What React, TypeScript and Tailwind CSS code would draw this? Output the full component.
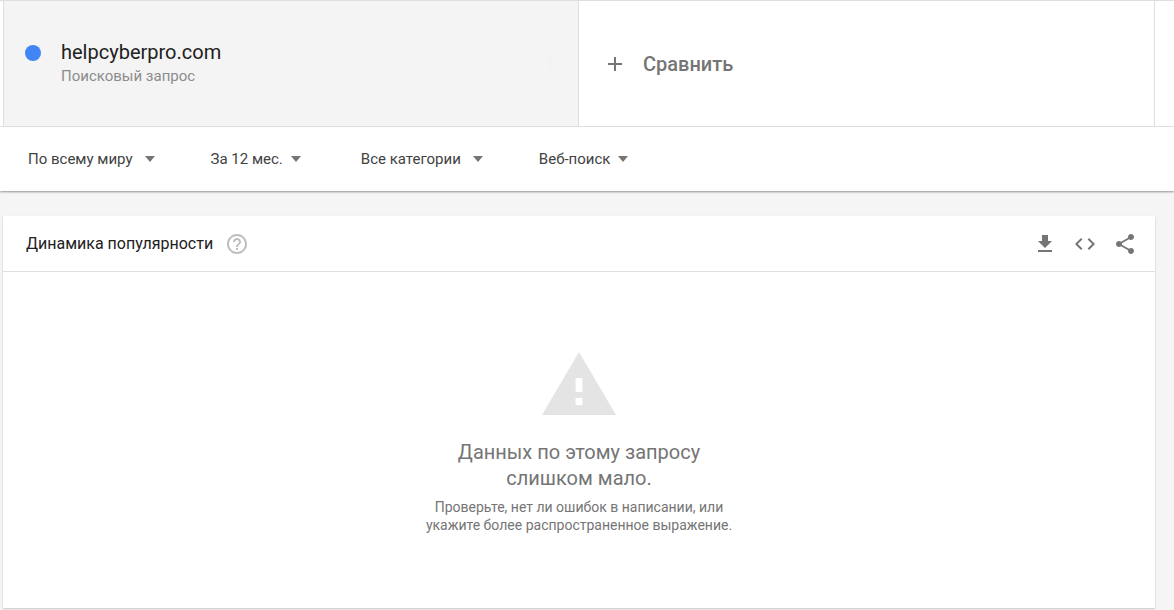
import type { ReactNode } from "react";

const filters = [
  { id: "geo", label: "Регион", value: "По всему миру", arrow: "right-0" },
  { id: "time", label: "Период", value: "За 12 мес.", arrow: "right-1" },
  { id: "category", label: "Категория", value: "Все категории", arrow: "right-0" },
  { id: "source", label: "Источник", value: "Веб-поиск", arrow: "right-1" },
];

function Icon({ children, className }: { children: ReactNode; className: string }) {
  return (
    <svg viewBox="0 0 24 24" fill="currentColor" aria-hidden="true" className={className}>
      {children}
    </svg>
  );
}

function IconButton({ label, children }: { label: string; children: ReactNode }) {
  return (
    <button type="button" aria-label={label} className="grid size-6 place-items-center text-[#757575]">
      {children}
    </button>
  );
}

function SearchTerms() {
  return (
    <section className="grid h-[127px] grid-cols-2 border-y border-[#dedede] pl-[3px] pr-[19px]">
      <div className="flex items-start border-x border-[#dedede] bg-[#f4f4f4] pl-[21px] pr-4 pt-[37px]">
        <span className="mt-[7px] size-4 shrink-0 rounded-full bg-[#4285f4]" />
        <div className="ml-5 flex-1">
          <h1 className="text-xl leading-7 text-[#212121]">helpcyberpro.com</h1>
          <p className="text-[15px] leading-5 text-[#8c8c8c]">Поисковый запрос</p>
        </div>
        <button type="button" aria-label="Ещё" className="mt-3 grid size-6 place-items-center text-[#f0f0f0]">
          <Icon className="size-5">
            <path d="M12 8a2 2 0 1 0 0-4 2 2 0 0 0 0 4zm0 2a2 2 0 1 0 0 4 2 2 0 0 0 0-4zm0 6a2 2 0 1 0 0 4 2 2 0 0 0 0-4z" />
          </Icon>
        </button>
      </div>
      <button
        type="button"
        className="flex items-center gap-4 border-r border-[#dedede] pl-6 text-xl font-medium text-[#757575]"
      >
        <Icon className="size-6">
          <path d="M19 13h-6v6h-2v-6H5v-2h6V5h2v6h6v2z" />
        </Icon>
        Сравнить
      </button>
    </section>
  );
}

function Filters() {
  return (
    <nav className="flex h-16 items-center gap-14 pl-7 text-[15px] text-[#424242]">
      {filters.map((filter) => (
        <div key={filter.id} className="relative flex items-center">
          <select
            id={filter.id}
            aria-label={filter.label}
            className="h-8 cursor-pointer appearance-none bg-transparent pr-[22px] field-sizing-content"
          >
            <option>{filter.value}</option>
          </select>
          <svg
            viewBox="0 0 10 6"
            aria-hidden="true"
            className={`pointer-events-none absolute h-[6px] w-[10px] fill-[#757575] ${filter.arrow}`}
          >
            <path d="M0 0h10L5 6z" />
          </svg>
        </div>
      ))}
    </nav>
  );
}

function PopularityCard() {
  return (
    <section className="ml-[3px] mr-[19px] mt-[25px] bg-white shadow-[0_1px_2px_rgba(0,0,0,0.2)]">
      <header className="flex h-14 items-center border-b border-[#e0e0e0] pl-[23px] pr-[18px]">
        <h2 className="text-base text-[#212121]">Динамика популярности</h2>
        <button type="button" aria-label="Справка" className="ml-3 text-[#bdbdbd]">
          <Icon className="size-6">
            <path d="M11 18h2v-2h-2v2zm1-16C6.48 2 2 6.48 2 12s4.48 10 10 10 10-4.48 10-10S17.52 2 12 2zm0 18c-4.41 0-8-3.59-8-8s3.59-8 8-8 8 3.59 8 8-3.59 8-8 8zm0-14c-2.21 0-4 1.79-4 4h2c0-1.1.9-2 2-2s2 .9 2 2c0 2-3 1.75-3 5h2c0-2.25 3-2.5 3-5 0-2.21-1.79-4-4-4z" />
          </Icon>
        </button>
        <div className="ml-auto flex gap-4">
          <IconButton label="Скачать">
            <Icon className="size-6">
              <path d="M19 9h-4V3H9v6H5l7 7 7-7zM5 18v2h14v-2H5z" />
            </Icon>
          </IconButton>
          <IconButton label="Встроить">
            <Icon className="size-6">
              <path d="M9.4 16.6L4.8 12l4.6-4.6L8 6l-6 6 6 6 1.4-1.4zm5.2 0l4.6-4.6-4.6-4.6L16 6l6 6-6 6-1.4-1.4z" />
            </Icon>
          </IconButton>
          <IconButton label="Поделиться">
            <Icon className="size-6">
              <path d="M18 16.08c-.76 0-1.44.3-1.96.77L8.91 12.7c.05-.23.09-.46.09-.7s-.04-.47-.09-.7l7.05-4.11c.54.5 1.25.81 2.04.81 1.66 0 3-1.34 3-3s-1.34-3-3-3-3 1.34-3 3c0 .24.04.47.09.7L8.04 9.81C7.5 9.31 6.79 9 6 9c-1.66 0-3 1.34-3 3s1.34 3 3 3c.79 0 1.5-.31 2.04-.81l7.12 4.16c-.05.21-.08.43-.08.65 0 1.61 1.31 2.92 2.92 2.92s2.92-1.31 2.92-2.92-1.31-2.92-2.92-2.92z" />
            </Icon>
          </IconButton>
        </div>
      </header>
      <div className="flex flex-col items-center pb-[74px] pt-20 text-center text-[#757575]">
        <svg viewBox="0 0 74 63" aria-hidden="true" className="h-[63px] w-[74px]">
          <path
            fill="#e4e4e4"
            fillRule="evenodd"
            d="M37 0L74 63H0zM33.6 26v14h6.8V26zM33.6 46v7h6.8v-7z"
          />
        </svg>
        <p className="mt-6 max-w-[280px] text-xl leading-[26px]">Данных по этому запросу слишком мало.</p>
        <p className="mt-[7px] max-w-[320px] text-sm leading-[18px]">
          Проверьте, нет ли ошибок в написании, или укажите более распространенное выражение.
        </p>
      </div>
    </section>
  );
}

export default function App() {
  return (
    <div className="min-h-screen bg-[#f5f5f5] font-[Roboto,sans-serif]">
      <header className="relative bg-white shadow-[0_1px_2px_rgba(0,0,0,0.4)]">
        <SearchTerms />
        <Filters />
      </header>
      <main>
        <PopularityCard />
      </main>
    </div>
  );
}
